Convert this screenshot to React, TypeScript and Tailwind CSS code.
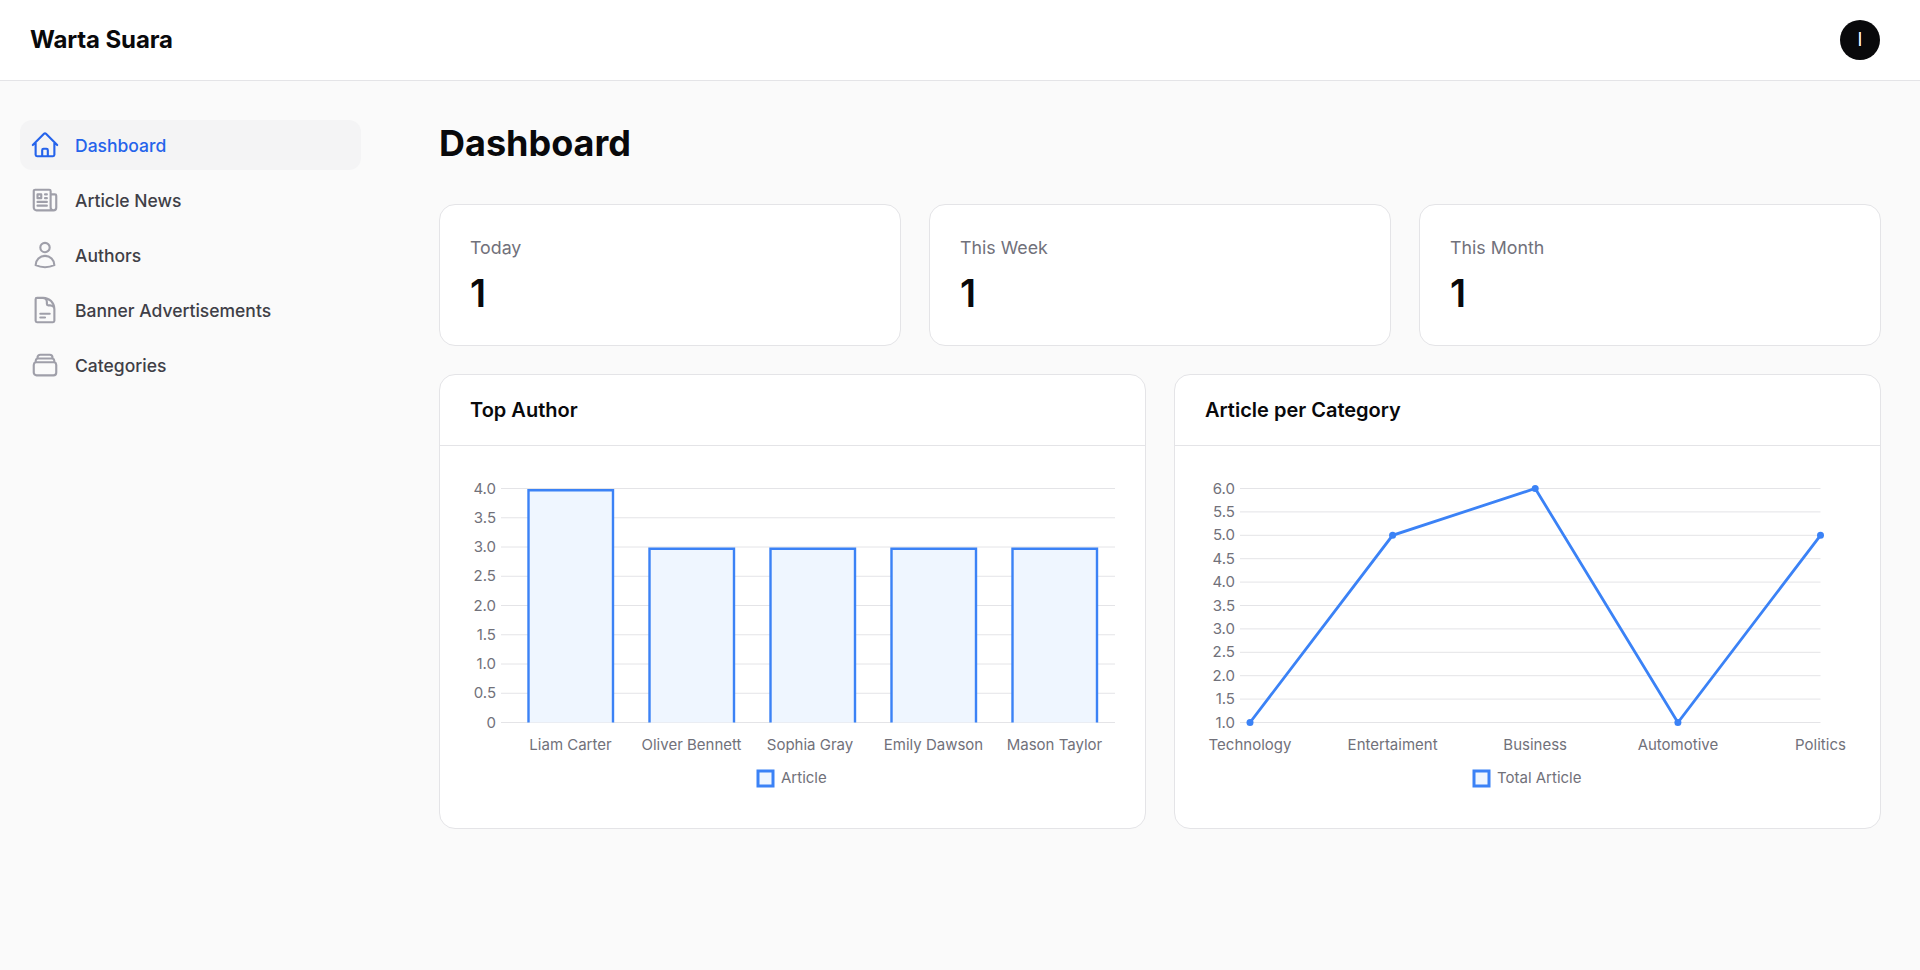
import {
  HiOutlineDocumentText,
  HiOutlineHome,
  HiOutlineNewspaper,
  HiOutlineRectangleStack,
  HiOutlineUser,
} from "react-icons/hi2";

const menu = [
  { label: "Dashboard", icon: HiOutlineHome, active: true },
  { label: "Article News", icon: HiOutlineNewspaper },
  { label: "Authors", icon: HiOutlineUser },
  { label: "Banner Advertisements", icon: HiOutlineDocumentText },
  { label: "Categories", icon: HiOutlineRectangleStack },
];

const stats = [
  { label: "Today", value: 1 },
  { label: "This Week", value: 1 },
  { label: "This Month", value: 1 },
];

const tickClass = "fill-[#71717a] text-[15px]";

const TopAuthorChart = () => {
  const ticks = ["4.0", "3.5", "3.0", "2.5", "2.0", "1.5", "1.0", "0.5", "0"];
  const bars = [
    { name: "Liam Carter", x: 528.5, top: 490.3, labelX: 570.5 },
    { name: "Oliver Bennett", x: 649.5, top: 548.8, labelX: 691.5 },
    { name: "Sophia Gray", x: 770.5, top: 548.8, labelX: 810 },
    { name: "Emily Dawson", x: 891.5, top: 548.8, labelX: 933.5 },
    { name: "Mason Taylor", x: 1012.5, top: 548.8, labelX: 1054.5 },
  ];
  return (
    <svg viewBox="440 446 705 382" className="block w-[705px] h-[382px]">
      {ticks.map((t, i) => {
        const y = 488.5 + i * 29.25;
        return (
          <g key={t}>
            <line x1="501" x2="1115" y1={y} y2={y} stroke="#e4e4e7" />
            <text x="496" y={y + 5} textAnchor="end" className={tickClass}>
              {t}
            </text>
          </g>
        );
      })}
      {bars.map((b) => (
        <g key={b.name}>
          <path
            d={`M${b.x} 722.5V${b.top}H${b.x + 84.5}V722.5`}
            fill="#eff6ff"
            stroke="#3b82f6"
            strokeWidth="2.4"
          />
          <text x={b.labelX} y="750" textAnchor="middle" className={tickClass}>
            {b.name}
          </text>
        </g>
      ))}
      <rect x="758" y="771" width="15" height="15" fill="#eff6ff" stroke="#3b82f6" strokeWidth="3" />
      <text x="781" y="783" className={tickClass}>
        Article
      </text>
    </svg>
  );
};

const CategoryChart = () => {
  const ticks = ["6.0", "5.5", "5.0", "4.5", "4.0", "3.5", "3.0", "2.5", "2.0", "1.5", "1.0"];
  const points = [
    { name: "Technology", x: 1250, y: 722.5 },
    { name: "Entertaiment", x: 1392.6, y: 535.3 },
    { name: "Business", x: 1535.2, y: 488.5 },
    { name: "Automotive", x: 1677.9, y: 722.5 },
    { name: "Politics", x: 1820.5, y: 535.3 },
  ];
  return (
    <svg viewBox="1175 446 705 382" className="block w-[705px] h-[382px]">
      {ticks.map((t, i) => {
        const y = 488.5 + i * 23.4;
        return (
          <g key={t}>
            <line x1="1240" x2="1820.5" y1={y} y2={y} stroke="#e4e4e7" />
            <text x="1235" y={y + 5} textAnchor="end" className={tickClass}>
              {t}
            </text>
          </g>
        );
      })}
      <polyline
        points={points.map((p) => `${p.x},${p.y}`).join(" ")}
        fill="none"
        stroke="#3b82f6"
        strokeWidth="2.8"
      />
      {points.map((p) => (
        <g key={p.name}>
          <circle cx={p.x} cy={p.y} r="3.5" fill="#3b82f6" />
          <text x={p.x} y="750" textAnchor="middle" className={tickClass}>
            {p.name}
          </text>
        </g>
      ))}
      <rect x="1474" y="771" width="15" height="15" fill="#eff6ff" stroke="#3b82f6" strokeWidth="3" />
      <text x="1497" y="783" className={tickClass}>
        Total Article
      </text>
    </svg>
  );
};

export default function App() {
  return (
    <div className="min-h-[970px] bg-zinc-50 text-zinc-950 font-['Inter',sans-serif]">
      <header className="h-[81px] bg-white border-b border-zinc-200 flex items-center justify-between pl-[30px] pr-10">
        <h1 className="text-2xl font-bold tracking-[-0.005em]">Warta Suara</h1>
        <div className="w-10 h-10 rounded-full bg-zinc-950 text-white text-lg flex items-center justify-center">
          I
        </div>
      </header>

      <div className="flex">
        <aside className="w-[381px] shrink-0 px-5 pt-[39px] flex flex-col gap-[5px]">
          {menu.map((item) => (
            <a
              key={item.label}
              className={`h-[50px] rounded-xl px-2.5 flex items-center gap-[15px] text-[17.5px] font-medium ${
                item.active ? "bg-zinc-100 text-[#2563eb]" : "text-zinc-700"
              }`}
            >
              <item.icon
                className={`w-[30px] h-[30px] stroke-[1.7] ${item.active ? "text-[#2563eb]" : "text-zinc-400"}`}
              />
              <span className="pt-0.5">{item.label}</span>
            </a>
          ))}
        </aside>

        <main className="flex-1 pl-[58px] pr-[39px] pt-[39px]">
          <h2 className="text-4xl font-bold leading-[46px]">Dashboard</h2>

          <div className="grid grid-cols-3 gap-7 mt-[38px]">
            {stats.map((s) => (
              <div key={s.label} className="h-[142px] bg-white border border-zinc-200 rounded-2xl px-[30px] pt-[29px]">
                <p className="text-[17.8px] leading-7 text-zinc-500">{s.label}</p>
                <p className="text-[38px] leading-[40px] font-semibold mt-[11px]">{s.value}</p>
              </div>
            ))}
          </div>

          <div className="grid grid-cols-2 gap-7 mt-7">
            <section className="bg-white border border-zinc-200 rounded-2xl overflow-hidden">
              <h3 className="h-[71px] border-b border-zinc-200 px-[30px] flex items-center text-xl font-semibold">
                Top Author
              </h3>
              <TopAuthorChart />
            </section>
            <section className="bg-white border border-zinc-200 rounded-2xl overflow-hidden">
              <h3 className="h-[71px] border-b border-zinc-200 px-[30px] flex items-center text-xl font-semibold">
                Article per Category
              </h3>
              <CategoryChart />
            </section>
          </div>
        </main>
      </div>
    </div>
  );
}
